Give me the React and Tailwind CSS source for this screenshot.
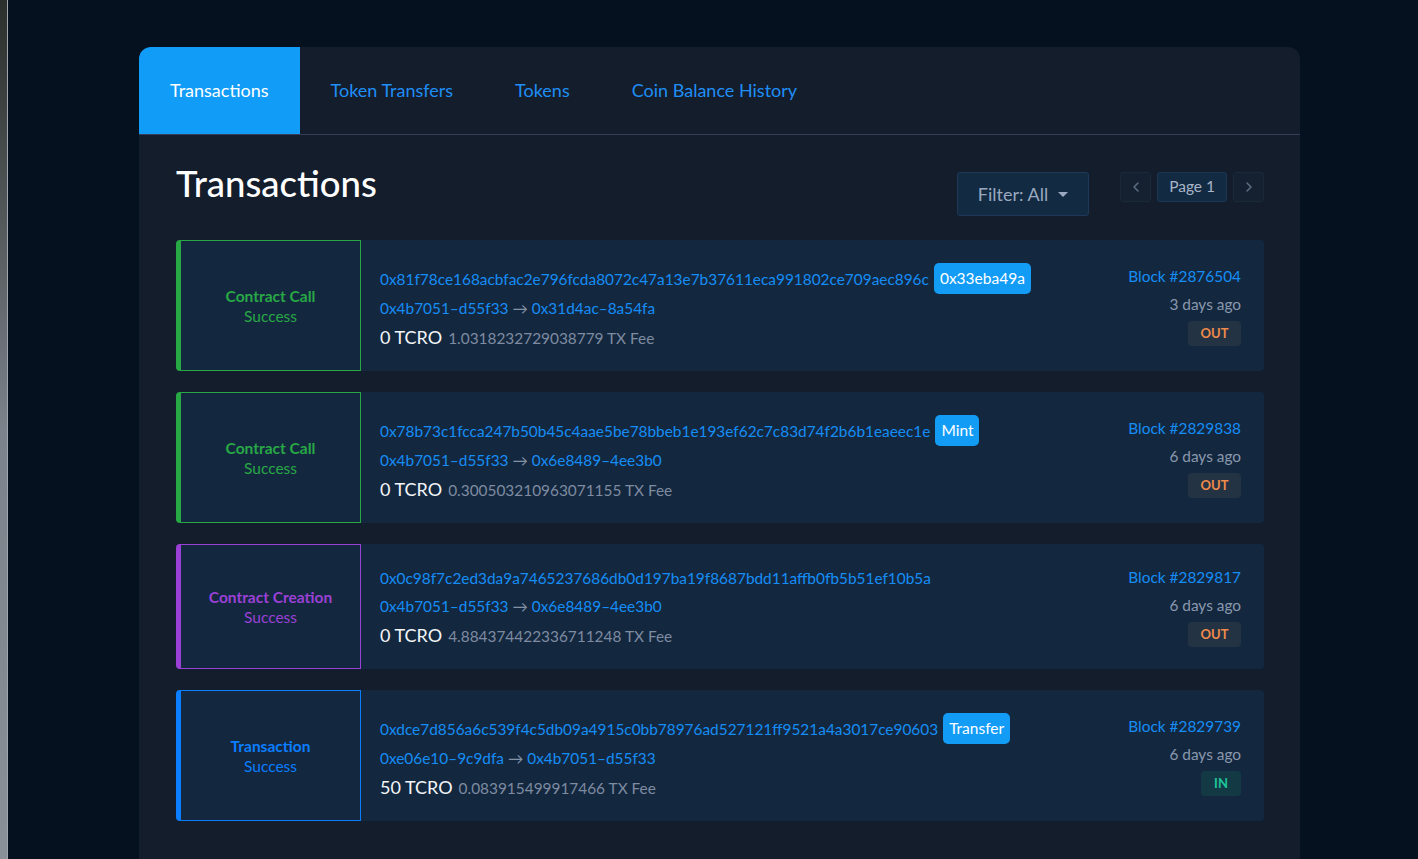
import React from 'react';
import { ChevronLeft, ChevronRight } from 'lucide-react';

const tabs = ['Transactions', 'Token Transfers', 'Tokens', 'Coin Balance History'];

const kinds = {
  call: { label: 'Contract Call', box: 'border-[#28a745] text-[#28a745]' },
  create: { label: 'Contract Creation', box: 'border-[#9b40d6] text-[#9b40d6]' },
  tx: { label: 'Transaction', box: 'border-[#0b7dff] text-[#0b7dff]' }
};

const txs = [
  {
    kind: 'call',
    hash: '0x81f78ce168acbfac2e796fcda8072c47a13e7b37611eca991802ce709aec896c',
    badge: '0x33eba49a',
    from: '0x4b7051–d55f33',
    to: '0x31d4ac–8a54fa',
    amount: '0 TCRO',
    fee: '1.0318232729038779',
    block: '2876504',
    age: '3 days ago',
    dir: 'OUT'
  },
  {
    kind: 'call',
    hash: '0x78b73c1fcca247b50b45c4aae5be78bbeb1e193ef62c7c83d74f2b6b1eaeec1e',
    badge: 'Mint',
    from: '0x4b7051–d55f33',
    to: '0x6e8489–4ee3b0',
    amount: '0 TCRO',
    fee: '0.300503210963071155',
    block: '2829838',
    age: '6 days ago',
    dir: 'OUT'
  },
  {
    kind: 'create',
    hash: '0x0c98f7c2ed3da9a7465237686db0d197ba19f8687bdd11affb0fb5b51ef10b5a',
    badge: null,
    from: '0x4b7051–d55f33',
    to: '0x6e8489–4ee3b0',
    amount: '0 TCRO',
    fee: '4.884374422336711248',
    block: '2829817',
    age: '6 days ago',
    dir: 'OUT'
  },
  {
    kind: 'tx',
    hash: '0xdce7d856a6c539f4c5db09a4915c0bb78976ad527121ff9521a4a3017ce90603',
    badge: 'Transfer',
    from: '0xe06e10–9c9dfa',
    to: '0x4b7051–d55f33',
    amount: '50 TCRO',
    fee: '0.083915499917466',
    block: '2829739',
    age: '6 days ago',
    dir: 'IN'
  }
];

const Pager = () => (
  <div className="flex items-center gap-[6px]">
    <button className="w-[31px] h-[30px] flex items-center justify-center rounded-[3px] bg-[#152131] border border-[#1a2838] text-[#5f6e84]">
      <ChevronLeft className="w-[16px] h-[16px]" strokeWidth={2.2} />
    </button>
    <div className="h-[30px] px-[11px] flex items-center rounded-[3px] bg-[#132a43] border border-[#1c3654] text-[15.5px] text-[#a8b5c9]">
      Page 1
    </div>
    <button className="w-[31px] h-[30px] flex items-center justify-center rounded-[3px] bg-[#152131] border border-[#1a2838] text-[#5f6e84]">
      <ChevronRight className="w-[16px] h-[16px]" strokeWidth={2.2} />
    </button>
  </div>
);

const TxCard = ({ tx }) => {
  const kind = kinds[tx.kind];
  return (
    <div className="flex rounded-[4px] bg-[#13283f]">
      <div className={`w-[185px] shrink-0 flex flex-col items-center justify-center border border-l-[5px] rounded-l-[4px] ${kind.box}`}>
        <span className="text-[15.5px] font-bold leading-[20px]">{kind.label}</span>
        <span className="text-[15.5px] leading-[20px]">Success</span>
      </div>
      <div className="flex-1 flex items-center justify-between pl-[19px] pr-[23px] pt-[23px] pb-[22px]">
        <div className="flex flex-col">
          <div className="flex items-center min-h-[20px]">
            <span className="text-[15.4px] leading-[20px] text-[#168df5]">{tx.hash}</span>
            {tx.badge && (
              <span className="ml-[5px] h-[31px] px-[6px] flex items-center rounded-[5px] bg-[#129cf6] text-[15.5px] text-white">
                {tx.badge}
              </span>
            )}
          </div>
          <div className={`${tx.badge ? 'mt-[4px]' : 'mt-[8px]'} text-[15.4px] leading-[20px]`}>
            <span className="text-[#168df5]">{tx.from}</span>
            <span className="text-[#8391a6]"> → </span>
            <span className="text-[#168df5]">{tx.to}</span>
          </div>
          <div className="mt-[8px] leading-[22px] flex items-baseline">
            <span className="text-[18px] text-[#f3f5f8]">{tx.amount}</span>
            <span className="ml-[6px] text-[15.4px] text-[#7f8ba1]">{tx.fee} TX Fee</span>
          </div>
        </div>
        <div className="flex flex-col items-end">
          <span className="text-[15.4px] leading-[20px] text-[#168df5]">Block #{tx.block}</span>
          <span className="mt-[8px] text-[15.4px] leading-[20px] text-[#8a97ad]">{tx.age}</span>
          {tx.dir === 'OUT' ? (
            <span className="mt-[7px] h-[25px] w-[53px] flex items-center justify-center rounded-[4px] bg-[#233344] text-[13px] font-bold text-[#f08a4b]">
              OUT
            </span>
          ) : (
            <span className="mt-[7px] h-[25px] w-[40px] flex items-center justify-center rounded-[4px] bg-[#133a44] text-[13px] font-bold text-[#1fc39a]">
              IN
            </span>
          )}
        </div>
      </div>
    </div>
  );
};

export default function App() {
  return (
    <div className="h-screen overflow-hidden flex bg-[#06111f]" style={{ fontFamily: 'Lato, "Open Sans", sans-serif' }}>
      {/* desktop edge */}
      <div className="w-[8px] shrink-0 bg-gradient-to-b from-[#2b302c] via-[#7c828b] to-[#8a9098] border-r border-[#a0a5ad]" />

      <div className="flex-1 pt-[47px] pl-[131px]">
        <div className="w-[1161px] min-h-[900px] rounded-t-[12px] bg-[#141d2b]">
          {/* tabs */}
          <div className="flex h-[88px] border-b border-[#373d58]">
            {tabs.map((t, i) => (
              <div
                key={t}
                className={
                  i === 0
                    ? 'px-[31px] flex items-center rounded-tl-[12px] bg-[#119cf7] text-white text-[18px]'
                    : 'px-[31px] flex items-center text-[#1f8ef5] text-[18px]'
                }
              >
                {t}
              </div>
            ))}
          </div>

          <div className="pl-[37px] pr-[36px] pt-[26px]">
            <div className="flex justify-between items-start">
              <h1 className="mt-[2px] text-[36.5px] leading-[40px] font-medium text-white">Transactions</h1>
              <div className="mt-[11px] flex items-start gap-[31px]">
                <button className="h-[44px] px-[20px] flex items-center gap-[10px] rounded-[3px] bg-[#132a43] border border-[#1d3957] text-[18px] text-[#9aa9bf]">
                  Filter: All
                  <span className="w-0 h-0 border-l-[5px] border-r-[5px] border-t-[5px] border-l-transparent border-r-transparent border-t-[#9aa9bf]" />
                </button>
                <Pager />
              </div>
            </div>

            <div className="mt-[24px] flex flex-col gap-[21px]">
              {txs.map((tx) => (
                <TxCard key={tx.hash} tx={tx} />
              ))}
            </div>

            <div className="mt-[38px] flex justify-end">
              <Pager />
            </div>
          </div>
        </div>
      </div>
    </div>
  );
}
